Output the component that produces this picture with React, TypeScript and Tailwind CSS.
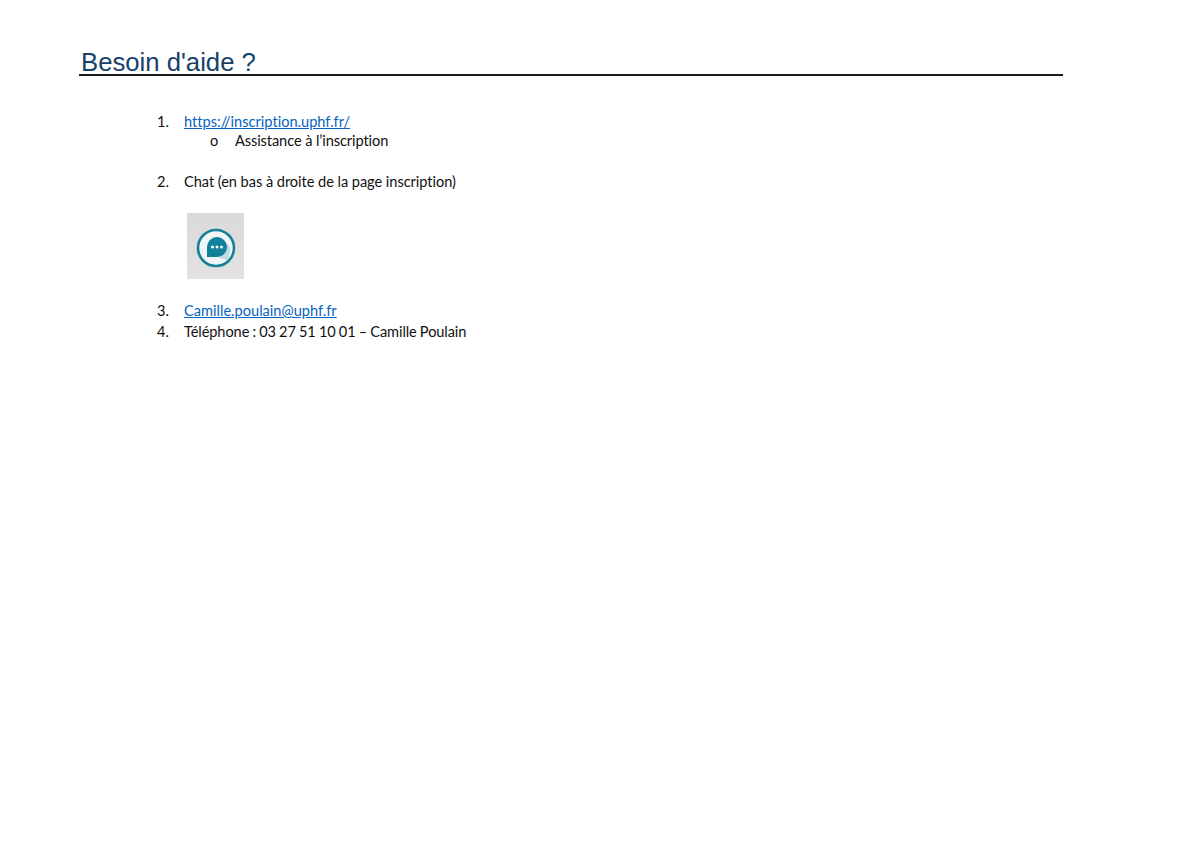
function ChatBadge() {
  return (
    <div className="w-[57px] h-[66px] pt-[4px] bg-gradient-to-b from-[#dadada] to-[#e2e2e2] flex items-center justify-center">
      <svg width="40" height="40" viewBox="0 0 40 40">
        <circle cx="20" cy="20" r="18" fill="#f2f5f5" stroke="#16829a" strokeWidth="2.6" />
        <path d="M21 15h8a6 6 0 0 1 5 7c0 4-1 7-3 10l-7-2a9 9 0 0 1-6-13z" fill="#bcdbe4" />
        <path d="M21 9a10 10 0 0 1 10 10a10 10 0 0 1-10 10h-10v-10a10 10 0 0 1 10-10z" fill="#11809a" />
        <circle cx="16.500" cy="19" r="1.500" fill="#ffffff" />
        <circle cx="21" cy="19" r="1.500" fill="#ffffff" />
        <circle cx="25.500" cy="19" r="1.500" fill="#ffffff" />
      </svg>
    </div>
  );
}

function Row({ num, className, children }: { num: string; className: string; children: React.ReactNode }) {
  return (
    <div className={"flex items-center " + className}>
      <span className="w-[27px]">{num}</span>
      <span>{children}</span>
    </div>
  );
}

export default function App() {
  return (
    <div className="w-[1200px] h-[849px] bg-white pt-[47px] pl-[79px] font-['Lato','Liberation_Sans',sans-serif] text-[14.600px] [font-variant-ligatures:none] text-[#111111]">
      <div className="w-[984px] h-[29px] border-b-2 border-[#1a1a1a]">
        <h1 className="pl-[2px] text-[25.700px] leading-[30px] font-normal text-[#17406a] font-['Liberation_Sans',Arial,sans-serif]">
          Besoin d'aide ?
        </h1>
      </div>
      <div className="pl-[78px] pt-[36px]">
        <Row num="1." className="h-[19px]">
          <a className="text-[#0563c1] underline">https://inscription.uphf.fr/</a>
        </Row>
        <div className="flex h-[20.500px] items-center pl-[53px]">
          <span className="w-[25px]">o</span>
          <span className="tracking-[-0.1px]">Assistance à l’inscription</span>
        </div>
        <Row num="2." className="h-[20.500px] mt-[20.500px] tracking-[-0.05px]">
          Chat (en bas à droite de la page inscription)
        </Row>
        <div className="pl-[30px] pt-[20px] pb-[22px]">
          <ChatBadge />
        </div>
        <Row num="3." className="h-[20.500px]">
          <a className="text-[#0563c1] underline">Camille.poulain@uphf.fr</a>
        </Row>
        <Row num="4." className="h-[20.500px] mt-[1px]">
          <span className="[word-spacing:-0.45px] tracking-[-0.1px]">Téléphone : 03 27 51 10 01 – Camille Poulain</span>
        </Row>
      </div>
    </div>
  );
}
